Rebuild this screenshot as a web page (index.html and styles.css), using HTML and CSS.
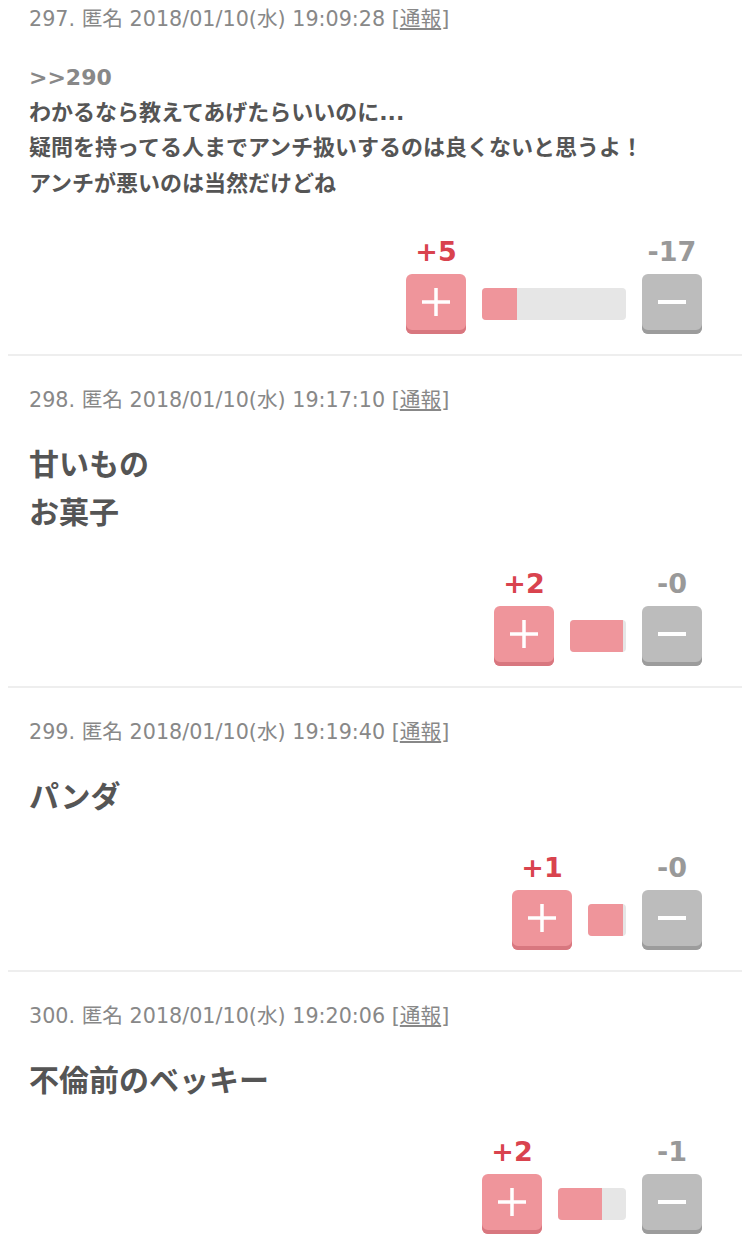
FILE: index.html
```html
<!DOCTYPE html>
<html lang="ja">
<head>
    <meta charset="UTF-8">
    <meta name="viewport" content="width=device-width, initial-scale=1.0">
    <title>コメント一覧</title>
    <link rel="stylesheet" href="styles.css">
</head>
<body>
    <div class="thread">
        <div class="post">
            <div class="post-head">297. 匿名 2018/01/10(水) 19:09:28 [<a class="report" href="#">通報</a>]</div>
            <div class="post-body small"><span class="anchor">&gt;&gt;290</span><br>わかるなら教えてあげたらいいのに...<br>疑問を持ってる人までアンチ扱いするのは良くないと思うよ！<br>アンチが悪いのは当然だけどね</div>
            <div class="vote">
                <div class="vote-col">
                    <div class="count count-plus">+5</div>
                    <button class="btn btn-plus"><svg width="28" height="28" viewBox="0 0 28 28"><path d="M14 0v28M0 14h28" stroke="#fff" stroke-width="3.5"/></svg></button>
                </div>
                <div class="bar" style="width:144px"><div class="bar-fill" style="width:24%"></div></div>
                <div class="vote-col">
                    <div class="count count-minus">-17</div>
                    <button class="btn btn-minus"><svg width="28" height="28" viewBox="0 0 28 28"><path d="M0 14h28" stroke="#fff" stroke-width="4"/></svg></button>
                </div>
            </div>
        </div>

        <div class="post">
            <div class="post-head">298. 匿名 2018/01/10(水) 19:17:10 [<a class="report" href="#">通報</a>]</div>
            <div class="post-body">甘いもの<br>お菓子</div>
            <div class="vote">
                <div class="vote-col">
                    <div class="count count-plus">+2</div>
                    <button class="btn btn-plus"><svg width="28" height="28" viewBox="0 0 28 28"><path d="M14 0v28M0 14h28" stroke="#fff" stroke-width="3.5"/></svg></button>
                </div>
                <div class="bar" style="width:56px"><div class="bar-fill" style="width:94%"></div></div>
                <div class="vote-col">
                    <div class="count count-minus">-0</div>
                    <button class="btn btn-minus"><svg width="28" height="28" viewBox="0 0 28 28"><path d="M0 14h28" stroke="#fff" stroke-width="4"/></svg></button>
                </div>
            </div>
        </div>

        <div class="post">
            <div class="post-head">299. 匿名 2018/01/10(水) 19:19:40 [<a class="report" href="#">通報</a>]</div>
            <div class="post-body">パンダ</div>
            <div class="vote">
                <div class="vote-col">
                    <div class="count count-plus">+1</div>
                    <button class="btn btn-plus"><svg width="28" height="28" viewBox="0 0 28 28"><path d="M14 0v28M0 14h28" stroke="#fff" stroke-width="3.5"/></svg></button>
                </div>
                <div class="bar" style="width:38px"><div class="bar-fill" style="width:92%"></div></div>
                <div class="vote-col">
                    <div class="count count-minus">-0</div>
                    <button class="btn btn-minus"><svg width="28" height="28" viewBox="0 0 28 28"><path d="M0 14h28" stroke="#fff" stroke-width="4"/></svg></button>
                </div>
            </div>
        </div>

        <div class="post">
            <div class="post-head">300. 匿名 2018/01/10(水) 19:20:06 [<a class="report" href="#">通報</a>]</div>
            <div class="post-body">不倫前のベッキー</div>
            <div class="vote">
                <div class="vote-col">
                    <div class="count count-plus">+2</div>
                    <button class="btn btn-plus"><svg width="28" height="28" viewBox="0 0 28 28"><path d="M14 0v28M0 14h28" stroke="#fff" stroke-width="3.5"/></svg></button>
                </div>
                <div class="bar" style="width:68px"><div class="bar-fill" style="width:65%"></div></div>
                <div class="vote-col">
                    <div class="count count-minus">-1</div>
                    <button class="btn btn-minus"><svg width="28" height="28" viewBox="0 0 28 28"><path d="M0 14h28" stroke="#fff" stroke-width="4"/></svg></button>
                </div>
            </div>
        </div>
    </div>
</body>
</html>
```

FILE: styles.css
```css
body {
    margin: 0;
    background-color: #fff;
    font-family: "DejaVu Sans", "Noto Sans CJK JP", sans-serif;
    color: #555;
}
.thread {
    margin: 0 8px;
}
.post {
    padding: 29px 40px 20px 21px;
    border-bottom: 2px solid #eee;
}
.post:first-child {
    padding-top: 4px;
}
.post-head {
    font-size: 20.7px;
    line-height: 30px;
    color: #888;
}
.report {
    color: #888;
    text-decoration: underline;
}
.post-body {
    margin-top: 26px;
    font-size: 30px;
    line-height: 1.6;
    font-weight: bold;
    color: #555;
    padding-bottom: 32px;
}
.post-body.small {
    font-size: 22px;
    padding-bottom: 36px;
}
.anchor {
    color: #888;
}
.vote {
    display: flex;
    justify-content: flex-end;
    align-items: flex-end;
    gap: 16px;
}
.vote-col {
    display: flex;
    flex-direction: column;
    align-items: center;
}
.count {
    font-size: 27px;
    line-height: 30px;
    font-weight: bold;
    margin-bottom: 7px;
}
.count-plus {
    color: #d9434e;
}
.count-minus {
    color: #999;
}
.btn {
    width: 60px;
    height: 60px;
    border: none;
    border-radius: 6px;
    padding: 0 0 4px 0;
    display: flex;
    align-items: center;
    justify-content: center;
    cursor: pointer;
}
.btn-plus {
    background-color: #ef959b;
    box-shadow: inset 0 -4px 0 #d8777f;
}
.btn-minus {
    background-color: #bcbcbc;
    box-shadow: inset 0 -4px 0 #9c9c9c;
}
.bar {
    height: 32px;
    margin-bottom: 14px;
    background-color: #e6e6e6;
    border-radius: 4px;
    overflow: hidden;
}
.bar-fill {
    height: 100%;
    background-color: #ef959b;
}
```
